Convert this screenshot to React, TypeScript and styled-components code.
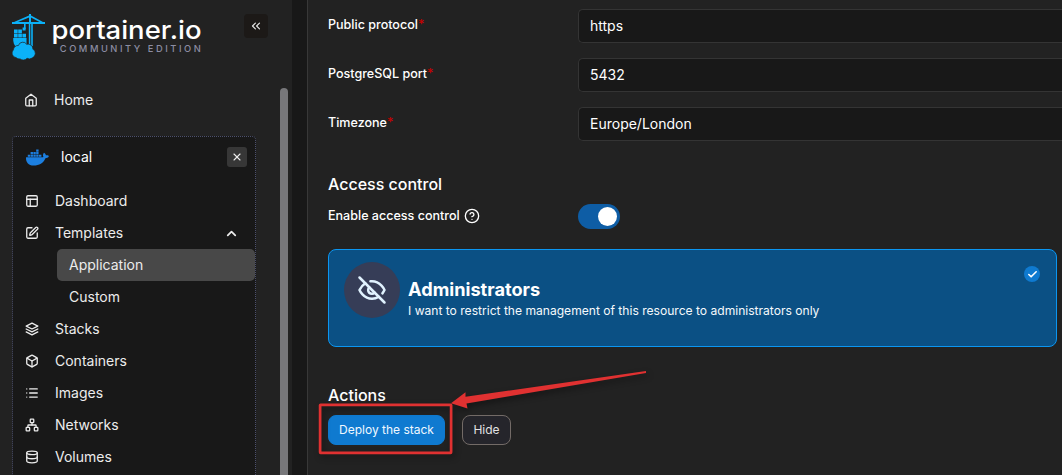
import React from "react";
import styled, { createGlobalStyle, css } from "styled-components";
import { FaDocker } from "react-icons/fa";
import { Box, Check, ChevronUp, ChevronsLeft, CircleHelp, Database, List, Network, PanelsTopLeft, SquarePen, X } from "lucide-react";

const GlobalStyle = createGlobalStyle`
  *, *::before, *::after { box-sizing: border-box; }
  body {
    margin: 0;
    overflow: hidden;
    background: #181818;
    color: #fff;
    font-family: Inter, "Liberation Sans", sans-serif;
  }
`;

const Page = styled.div`
  position: relative;
  display: flex;
  width: 1062px;
  height: 475px;
  overflow: hidden;
`;

const Sidebar = styled.aside`
  display: flex;
  flex-direction: column;
  width: 292px;
  flex: none;
  background: #222;
`;

const Brand = styled.header`
  display: flex;
  justify-content: space-between;
  height: 88px;
  padding: 14px 24px 0 12px;
`;

const CollapseButton = styled.button`
  display: grid;
  place-items: center;
  width: 24px;
  height: 24px;
  padding: 0;
  border: 0;
  border-radius: 4px;
  background: #1c1917;
  color: #e4e4e4;
`;

const Scroller = styled.div`
  display: flex;
  justify-content: space-between;
  flex: 1;
  min-height: 0;
  padding: 0 4px 0 12px;
`;

const ScrollThumb = styled.div`
  width: 8px;
  height: 500px;
  border-radius: 4px;
  background: #77777a;
`;

const Nav = styled.nav`
  width: 244px;
`;

const NavItem = styled.div<{ $home?: boolean }>`
  display: flex;
  align-items: center;
  height: 32px;
  padding: 0 16px 0 12px;
  font-size: 14px;
  color: #ececec;
  svg { flex: none; }
  span { flex: 1; margin-left: 16px; padding-bottom: 2px; }
  ${(p) => p.$home && css`height: 24px;`}
`;

const SubItem = styled.div<{ $active?: boolean }>`
  height: 32px;
  margin-left: 44px;
  padding-left: 12px;
  line-height: 32px;
  font-size: 14px;
  color: #ececec;
  border-radius: 5px;
  background: ${(p) => (p.$active ? "#484848" : "transparent")};
`;

const Environment = styled.section`
  height: 380px;
  margin-top: 24px;
  border: 1px dotted #4c506c;
  border-radius: 4px;
  background: #181818;
`;

const EnvironmentHead = styled.div`
  display: flex;
  align-items: center;
  height: 40px;
  margin-bottom: 8px;
  padding: 0 8px 0 13px;
  font-size: 14px;
  span { flex: 1; margin-left: 12px; padding-bottom: 2px; }
`;

const CloseButton = styled.button`
  display: grid;
  place-items: center;
  width: 20px;
  height: 20px;
  padding: 0;
  border: 0;
  border-radius: 3px;
  background: #373737;
  color: #ececec;
`;

const Panel = styled.main`
  flex: 1;
  min-width: 0;
  margin-left: 15px;
  padding: 9px 5px 0 20px;
  border-left: 1px solid #383838;
  background: #222;
`;

const Field = styled.label`
  display: flex;
  height: 34px;
  margin: 0 -5px 15px 0;
  font-size: 12.55px;
  font-weight: 500;
  line-height: 32px;
`;

const FieldName = styled.span`
  width: 250px;
  flex: none;
`;

const Required = styled.span`
  color: #c80000;
`;

const Value = styled.input`
  flex: 1;
  min-width: 0;
  height: 34px;
  padding: 0 11px 2px;
  border: 1px solid #343434;
  border-right: 0;
  border-radius: 5px 0 0 5px;
  background: #181818;
  color: #fff;
  font: 400 14px Inter, sans-serif;
`;

const SectionTitle = styled.h2<{ $top: number }>`
  margin: ${(p) => p.$top}px 0 0;
  font-size: 16px;
  font-weight: 500;
  line-height: 20px;
`;

const SwitchRow = styled.div`
  display: flex;
  align-items: center;
  height: 26px;
  margin-top: 9px;
  font-size: 12.55px;
  font-weight: 500;
`;

const SwitchLabel = styled.span`
  display: flex;
  align-items: center;
  gap: 4px;
  width: 250px;
`;

const SwitchText = styled.span`
  padding-bottom: 2px;
`;

const Switch = styled.span`
  display: flex;
  justify-content: flex-end;
  width: 42px;
  height: 25px;
  padding: 3px;
  border-radius: 13px;
  background: #0e5da5;
  &::after {
    content: "";
    width: 19px;
    height: 19px;
    border-radius: 50%;
    background: #fff;
  }
`;

const OptionCard = styled.div`
  display: flex;
  width: 729px;
  height: 98px;
  margin-top: 20px;
  padding: 12px 16px 0 15px;
  border: 1px solid #0b96f1;
  border-radius: 8px;
  background: #0b5084;
`;

const OptionBadge = styled.div`
  display: grid;
  place-items: center;
  width: 56px;
  height: 56px;
  flex: none;
  border-radius: 50%;
  background: #363d57;
  color: #e0f2fe;
`;

const OptionText = styled.div`
  flex: 1;
  margin: 16px 0 0 8px;
`;

const OptionTitle = styled.div`
  font-size: 18.2px;
  font-weight: 700;
  line-height: 23px;
`;

const OptionBody = styled.div`
  font-size: 12.08px;
  line-height: 20px;
  color: #f5f9fc;
`;

const CheckMark = styled.span`
  display: grid;
  place-items: center;
  width: 16px;
  height: 16px;
  margin-top: 4px;
  border-radius: 50%;
  background: #0f7ad0;
`;

const Buttons = styled.div`
  display: flex;
  gap: 17px;
  margin-top: 10px;
`;

const Button = styled.button<{ $primary?: boolean }>`
  width: ${(p) => (p.$primary ? 117 : 49)}px;
  height: 30px;
  padding: 0 0 2px;
  border: 1px solid ${(p) => (p.$primary ? "#0f7ad0" : "#736b67")};
  border-radius: 8px;
  background: ${(p) => (p.$primary ? "#0f7ad0" : "#25252b")};
  color: ${(p) => (p.$primary ? "#f0f8ff" : "#e2e2e2")};
  font: 400 12px Inter, sans-serif;
`;

const Annotation = styled.svg`
  position: absolute;
  left: 312px;
  top: 364px;
  filter: drop-shadow(2px 3px 3px rgba(0, 0, 0, 0.4));
`;

const lucide = { fill: "none", stroke: "currentColor", strokeWidth: 2.2, strokeLinecap: "round", strokeLinejoin: "round", viewBox: "0 0 24 24" } as const;

const HomeIcon = () => (
  <svg width="14" height="14" {...lucide}>
    <path d="m3 9 9-7 9 7v11a2 2 0 0 1-2 2H5a2 2 0 0 1-2-2z" />
    <path d="M9 22V12h6v10" />
  </svg>
);

const StacksIcon = () => (
  <svg width="14" height="14" {...lucide}>
    <path d="m12 2 10 5-10 5L2 7z" />
    <path d="m2 12 10 5 10-5M2 17l10 5 10-5" />
  </svg>
);

const HiddenIcon = () => (
  <svg width="30" height="30" {...lucide} strokeWidth={2}>
    <path d="M9.88 9.88a3 3 0 1 0 4.24 4.24" />
    <path d="M10.73 5.08A10.43 10.43 0 0 1 12 5c7 0 10 7 10 7a13.16 13.16 0 0 1-1.67 2.68" />
    <path d="M6.61 6.61A13.526 13.526 0 0 0 2 12s3 7 10 7a9.74 9.74 0 0 0 5.39-1.61" />
    <path d="m2 2 20 20" />
  </svg>
);

const Logo = () => (
  <svg width="196" height="48" viewBox="12 14 196 48">
    <g fill="#0bb1f8">
      <path d="M29 14h2v1.5l12 6.5h2v2H12v-2h2L29 15.5zM29 17.4 18 22h11zM31 17.4V22h8.5z" />
      <path d="M28.8 23.5h1.5V46h-1.5zM31.2 23.5h1.6V46h-1.6zM24 23.5h1.6v5.5H24z" />
      <path d="M22.6 27.5h3v3h-3zM14 29.5h3.7v3.7H14zM18.2 29.5h3.7v3.7h-3.7zM14 33.7h3.7v3.7H14zM18.2 33.7h3.7v3.7h-3.7zM22.4 33.7H26v3.7h-3.6z" />
      <path d="M13.2 38h13.3v6.5L22 47h-6c-2-2-3-5-2.8-9z" />
      <path d="M16 57.6a4.6 4.6 0 0 1-2.6-7.8 4.6 4.6 0 0 1 5-4.3 4.6 4.6 0 0 1 8.3-1.2 4.8 4.8 0 0 1 6.2 4.8 5 5 0 0 1-.8 9 5 5 0 0 1-5 .2 5 5 0 0 1-7 .6 4.6 4.6 0 0 1-4.1-1.3z" stroke="#222" strokeWidth="0.7" />
    </g>
    <text x="51.5" y="39" fill="#fff" fontFamily="Inter, sans-serif" fontSize="25.8" fontWeight="500" textLength="150" lengthAdjust="spacingAndGlyphs">portainer.io</text>
    <text x="59.8" y="52.4" fill="#8c8da2" fontFamily="Inter, sans-serif" fontSize="9.3" fontWeight="500" textLength="141">COMMUNITY EDITION</text>
  </svg>
);

const fields = [["Public protocol", "https"], ["PostgreSQL port", "5432"], ["Timezone", "Europe/London"]];

const menuIcon = { size: 14, strokeWidth: 2.2 };

export default function App() {
  return (
    <Page>
      <GlobalStyle />
      <Sidebar>
        <Brand>
          <Logo />
          <CollapseButton aria-label="Collapse"><ChevronsLeft size={14} /></CollapseButton>
        </Brand>
        <Scroller>
          <Nav>
            <NavItem $home><HomeIcon /><span>Home</span></NavItem>
            <Environment>
              <EnvironmentHead>
                <FaDocker size={23} color="#1c7fe0" />
                <span>local</span>
                <CloseButton aria-label="Close"><X size={12} strokeWidth={2.2} /></CloseButton>
              </EnvironmentHead>
              <NavItem><PanelsTopLeft {...menuIcon} /><span>Dashboard</span></NavItem>
              <NavItem><SquarePen {...menuIcon} /><span>Templates</span><ChevronUp size={15} strokeWidth={2.8} /></NavItem>
              <SubItem $active>Application</SubItem>
              <SubItem>Custom</SubItem>
              <NavItem><StacksIcon /><span>Stacks</span></NavItem>
              <NavItem><Box {...menuIcon} /><span>Containers</span></NavItem>
              <NavItem><List {...menuIcon} /><span>Images</span></NavItem>
              <NavItem><Network {...menuIcon} /><span>Networks</span></NavItem>
              <NavItem><Database {...menuIcon} /><span>Volumes</span></NavItem>
            </Environment>
          </Nav>
          <ScrollThumb />
        </Scroller>
      </Sidebar>
      <Panel>
        {fields.map(([name, value]) => (
          <Field key={name}>
            <FieldName>{name}<Required>*</Required></FieldName>
            <Value defaultValue={value} />
          </Field>
        ))}
        <SectionTitle $top={33}>Access control</SectionTitle>
        <SwitchRow>
          <SwitchLabel><SwitchText>Enable access control</SwitchText><CircleHelp size={16} /></SwitchLabel>
          <Switch />
        </SwitchRow>
        <OptionCard>
          <OptionBadge><HiddenIcon /></OptionBadge>
          <OptionText>
            <OptionTitle>Administrators</OptionTitle>
            <OptionBody>I want to restrict the management of this resource to administrators only</OptionBody>
          </OptionText>
          <CheckMark><Check size={11} strokeWidth={3.5} /></CheckMark>
        </OptionCard>
        <SectionTitle $top={38}>Actions</SectionTitle>
        <Buttons>
          <Button $primary>Deploy the stack</Button>
          <Button>Hide</Button>
        </Buttons>
      </Panel>
      <Annotation width="345" height="100" viewBox="312 364 345 100">
        <rect x="320.1" y="404.8" width="131" height="48" rx="0.5" fill="none" stroke="#e03131" strokeWidth="2.7" />
        <path d="M451 403.3 465.5 392.3V396.8L646 371V373L466.5 403.5 467.5 408.5z" fill="#e03131" />
      </Annotation>
    </Page>
  );
}
